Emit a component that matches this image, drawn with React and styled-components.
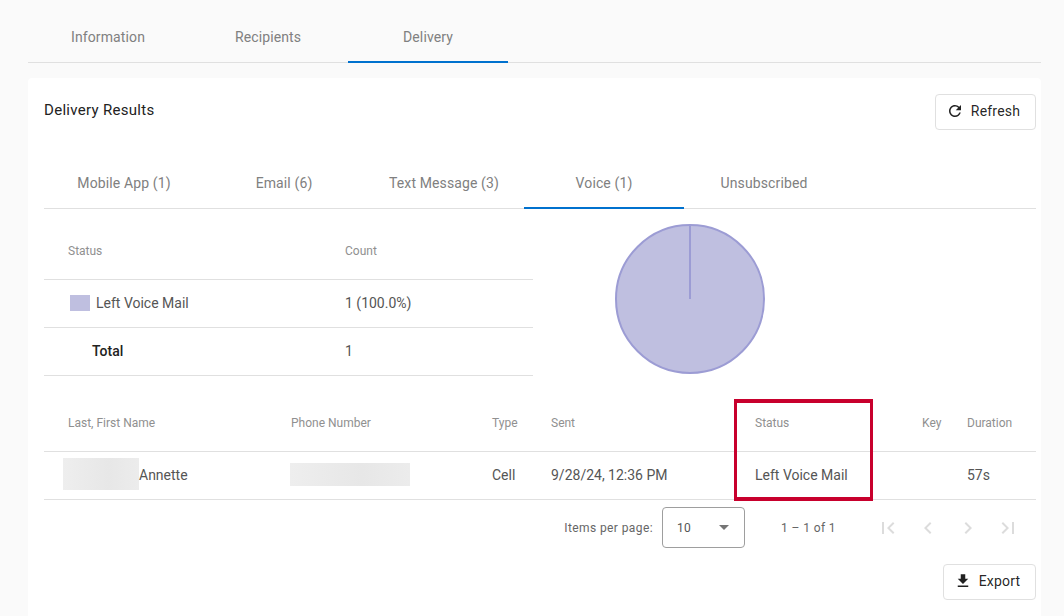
import React from "react";
import styled, { createGlobalStyle } from "styled-components";
import {
  MdChevronLeft,
  MdChevronRight,
  MdFileDownload,
  MdFirstPage,
  MdLastPage,
  MdRefresh,
} from "react-icons/md";

const GlobalStyle = createGlobalStyle`
  html, body {
    margin: 0;
    height: 100%;
    overflow: hidden;
    background: #fafafa;
    font-family: Roboto, "Liberation Sans", sans-serif;
    color: rgba(0, 0, 0, 0.87);
  }
`;

const Page = styled.div`
  height: 616px;
  padding: 0 23px 0 28px;
  box-sizing: border-box;
  display: flex;
  flex-direction: column;
`;

const TabBar = styled.div`
  display: flex;
  flex: none;
  border-bottom: 1px solid #e0e0e0;
`;

const Tab = styled.div`
  width: 160px;
  height: ${(p) => p.$height}px;
  box-sizing: border-box;
  display: flex;
  align-items: center;
  justify-content: center;
  padding-top: ${(p) => p.$shift || 0}px;
  padding-bottom: ${(p) => (p.$shift ? 0 : 2)}px;
  font-size: 14px;
  font-weight: 400;
  letter-spacing: 0.12px;
  color: #808080;
  border-bottom: 2px solid ${(p) => (p.$active ? "#0071ce" : "transparent")};
  margin-bottom: -1px;
`;

const Card = styled.section`
  flex: 1;
  margin-top: 15px;
  padding: 16px 5px 0 16px;
  background: #fff;
  border-radius: 4px 4px 0 0;
`;

const CardHeader = styled.div`
  display: flex;
  justify-content: space-between;
  align-items: flex-start;
  height: 36px;
  margin-bottom: 30px;
`;

const Title = styled.h2`
  margin: 7px 0 0;
  font-size: 15px;
  line-height: 18px;
  font-weight: 400;
  letter-spacing: 0.3px;
  color: #222;
`;

const OutlineButton = styled.button`
  display: flex;
  align-items: center;
  justify-content: center;
  gap: 7px;
  width: ${(p) => p.$width}px;
  height: 36px;
  padding: 0 5px 2px 0;
  background: #fff;
  border: 1px solid #e0e0e0;
  border-radius: 4px;
  font-family: inherit;
  font-size: 14px;
  font-weight: 400;
  letter-spacing: 0.2px;
  color: rgba(0, 0, 0, 0.87);

  svg {
    font-size: 18px;
  }
`;

const Summary = styled.div`
  display: flex;
`;

const SummaryTable = styled.div`
  width: 489px;
`;

const SummaryRow = styled.div`
  display: grid;
  grid-template-columns: 277px 1fr;
  align-items: center;
  height: ${(p) => p.$height || 48}px;
  box-sizing: border-box;
  padding: ${(p) => p.$shift || 0}px 0 ${(p) => (p.$shift ? 0 : 2)}px 24px;
  border-bottom: 1px solid #e0e0e0;
  font-size: 14px;
  color: #555;
`;

const HeadCell = styled.div`
  font-size: 12px;
  color: #909090;
`;

const LegendCell = styled.div`
  display: flex;
  align-items: center;
  gap: 6px;
`;

const Swatch = styled.span`
  width: 20px;
  height: 16px;
  margin-left: 2px;
  background: #bfbfe0;
`;

const TotalLabel = styled.div`
  padding-left: 24px;
  font-weight: 500;
  color: #222;
`;

const ChartBox = styled.div`
  width: 314px;
  display: flex;
  justify-content: center;
  padding-top: 15px;
`;

const DetailRow = styled.div`
  display: grid;
  grid-template-columns: 223px 201px 59px 204px 167px 45px 69px;
  align-items: center;
  height: ${(p) => p.$height || 48}px;
  box-sizing: border-box;
  padding: 0 0 ${(p) => (p.$height ? 0 : 2)}px 24px;
  border-bottom: 1px solid #e0e0e0;
  font-size: 14px;
  color: #555;
`;

const DetailHead = styled(HeadCell)`
  padding-top: 18px;
`;

const DetailWrap = styled.div`
  position: relative;
`;

const Highlight = styled.div`
  position: absolute;
  left: 690px;
  top: 23px;
  width: 139px;
  height: 102px;
  box-sizing: border-box;
  border-style: solid;
  border-color: #c8002d;
  border-width: 4px 3px;
  pointer-events: none;
`;

const NameCell = styled.div`
  display: flex;
  align-items: center;
`;

const Redacted = styled.span`
  flex: none;
  display: block;
  width: ${(p) => p.$width}px;
  height: ${(p) => p.$height}px;
  margin: 0 0 1px ${(p) => p.$offset}px;
  background: linear-gradient(90deg, #eeeeee, #e7e7e7 60%, #ececec);
`;

const Paginator = styled.div`
  display: flex;
  justify-content: flex-end;
  align-items: center;
  padding: 7px 8px 0 0;
  font-size: 12px;
  letter-spacing: 0.4px;
  color: #666;
`;

const PageSize = styled.div`
  display: flex;
  align-items: center;
  justify-content: space-between;
  width: 83px;
  height: 41px;
  box-sizing: border-box;
  margin-left: 9px;
  padding: 0 15px 0 14px;
  border: 1px solid #9e9e9e;
  border-radius: 4px;
  color: #555;
`;

const Caret = styled.span`
  width: 0;
  height: 0;
  border-left: 5px solid transparent;
  border-right: 5px solid transparent;
  border-top: 5px solid #757575;
`;

const RangeLabel = styled.div`
  margin: 0 32px 0 36px;
`;

const PageButton = styled.span`
  display: flex;
  align-items: center;
  justify-content: center;
  width: 40px;
  height: 40px;
  font-size: 24px;
  color: #dcdcdc;
`;

const Footer = styled.div`
  display: flex;
  justify-content: flex-end;
  margin-top: 16px;
`;

const summaryRows = [{ label: "Left Voice Mail", count: "1 (100.0%)" }];

const PieChart = () => (
  <svg width="150" height="150" viewBox="0 0 150 150">
    <circle cx="75" cy="75" r="74" fill="#bfbfe0" stroke="#9c9cd4" strokeWidth="2" />
    <line x1="75" y1="1" x2="75" y2="75" stroke="#9c9cd4" strokeWidth="2" />
  </svg>
);

export default function App() {
  return (
    <Page>
      <GlobalStyle />
      <TabBar>
        <Tab $height={63} $shift={13}>Information</Tab>
        <Tab $height={63} $shift={13}>Recipients</Tab>
        <Tab $height={63} $shift={13} $active>Delivery</Tab>
      </TabBar>

      <Card>
        <CardHeader>
          <Title>Delivery Results</Title>
          <OutlineButton $width={101}>
            <MdRefresh />
            Refresh
          </OutlineButton>
        </CardHeader>

        <TabBar>
          <Tab $height={49}>Mobile App (1)</Tab>
          <Tab $height={49}>Email (6)</Tab>
          <Tab $height={49}>Text Message (3)</Tab>
          <Tab $height={49} $active>Voice (1)</Tab>
          <Tab $height={49}>Unsubscribed</Tab>
        </TabBar>

        <Summary>
          <SummaryTable>
            <SummaryRow $height={71} $shift={14}>
              <HeadCell>Status</HeadCell>
              <HeadCell>Count</HeadCell>
            </SummaryRow>
            {summaryRows.map((row) => (
              <SummaryRow key={row.label}>
                <LegendCell>
                  <Swatch />
                  {row.label}
                </LegendCell>
                <div>{row.count}</div>
              </SummaryRow>
            ))}
            <SummaryRow>
              <TotalLabel>Total</TotalLabel>
              <div>1</div>
            </SummaryRow>
          </SummaryTable>
          <ChartBox>
            <PieChart />
          </ChartBox>
        </Summary>

        <DetailWrap>
          <DetailRow $height={76}>
            <DetailHead>Last, First Name</DetailHead>
            <DetailHead>Phone Number</DetailHead>
            <DetailHead>Type</DetailHead>
            <DetailHead>Sent</DetailHead>
            <DetailHead>Status</DetailHead>
            <DetailHead>Key</DetailHead>
            <DetailHead>Duration</DetailHead>
          </DetailRow>
          <DetailRow>
            <NameCell>
              <Redacted $width={76} $height={32} $offset={-5} />
              <span>Annette</span>
            </NameCell>
            <div>
              <Redacted $width={120} $height={23} $offset={-1} />
            </div>
            <div>Cell</div>
            <div>9/28/24, 12:36 PM</div>
            <div>Left Voice Mail</div>
            <div />
            <div>57s</div>
          </DetailRow>
          <Highlight />
        </DetailWrap>

        <Paginator>
          Items per page:
          <PageSize>
            10
            <Caret />
          </PageSize>
          <RangeLabel>1 – 1 of 1</RangeLabel>
          <PageButton><MdFirstPage /></PageButton>
          <PageButton><MdChevronLeft /></PageButton>
          <PageButton><MdChevronRight /></PageButton>
          <PageButton><MdLastPage /></PageButton>
        </Paginator>

        <Footer>
          <OutlineButton $width={93}>
            <MdFileDownload />
            Export
          </OutlineButton>
        </Footer>
      </Card>
    </Page>
  );
}
